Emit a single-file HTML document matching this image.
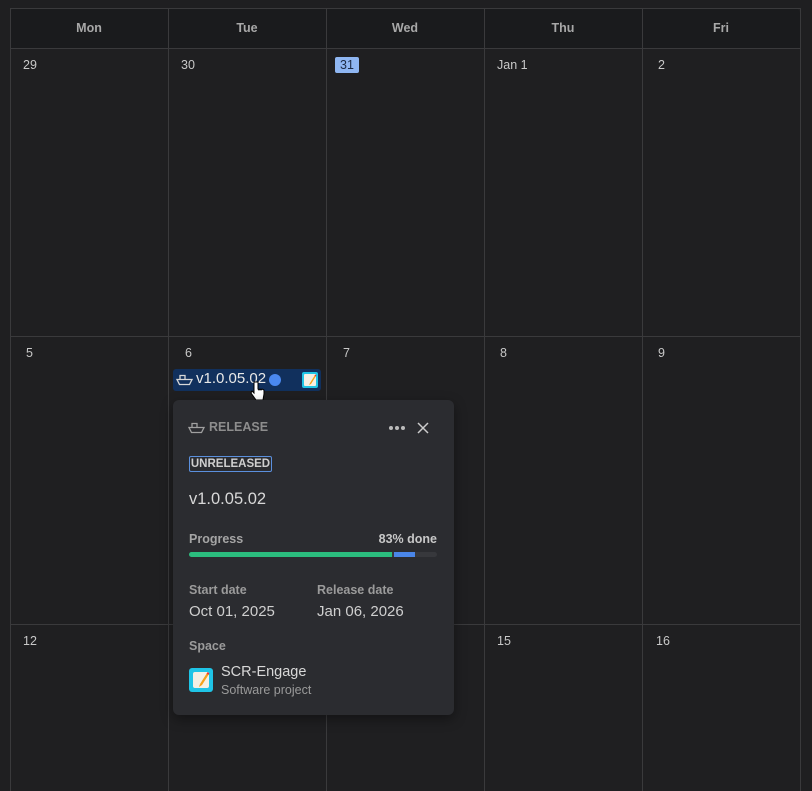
<!DOCTYPE html><html><head><style>
*{margin:0;padding:0;box-sizing:border-box}
body{width:812px;height:791px;background:#1f1f21;font-family:"Liberation Sans",sans-serif;position:relative;overflow:hidden;color:#d0d0d0}
.a{position:absolute}
.v{position:absolute;width:1px;background:#3a3a3c;top:8px;bottom:0}
.h{position:absolute;height:1px;background:#3a3a3c;left:10px;width:790px}
.hd{position:absolute;top:8px;height:40px;line-height:40px;text-align:center;font-size:12.5px;font-weight:bold;color:#a8a8a8;width:158px}
.d{position:absolute;font-size:12.5px;color:#c8c8c8}
.lbl{position:absolute;font-size:12.5px;font-weight:bold;color:#9b9b9b}
.val{position:absolute;font-size:15px;color:#cfcfcf}
.dot{position:absolute;top:426px;width:4px;height:4px;border-radius:50%;background:#bbb}
</style></head><body>
<div class="a" style="left:10px;top:8px;width:790px;height:40px;background:#1a1b1d;border-radius:6px 6px 0 0"></div>
<div class="v" style="left:10px"></div><div class="v" style="left:168px"></div><div class="v" style="left:326px"></div><div class="v" style="left:484px"></div><div class="v" style="left:642px"></div><div class="v" style="left:800px"></div>
<div class="h" style="top:8px"></div><div class="h" style="top:48px"></div><div class="h" style="top:336px"></div><div class="h" style="top:624px"></div>
<div class="hd" style="left:10px">Mon</div><div class="hd" style="left:168px">Tue</div><div class="hd" style="left:326px">Wed</div><div class="hd" style="left:484px">Thu</div><div class="hd" style="left:642px">Fri</div>
<div class="d" style="left:23px;top:58px">29</div><div class="d" style="left:181px;top:58px">30</div>
<div class="a" style="left:335px;top:57px;width:24px;height:16px;background:#8fb6f2;border-radius:2px;color:#1c2a44;font-size:12.5px;text-align:center;line-height:16px">31</div>
<div class="d" style="left:497px;top:58px">Jan 1</div><div class="d" style="left:658px;top:58px">2</div>
<div class="d" style="left:26px;top:346px">5</div><div class="d" style="left:185px;top:346px">6</div><div class="d" style="left:343px;top:346px">7</div><div class="d" style="left:500px;top:346px">8</div><div class="d" style="left:658px;top:346px">9</div>
<div class="d" style="left:23px;top:634px">12</div><div class="d" style="left:497px;top:634px">15</div><div class="d" style="left:656px;top:634px">16</div>
<!-- chip -->
<div class="a" style="left:173px;top:369px;width:148px;height:22px;background:#11305d;border-radius:3px"></div>
<svg class="a" style="left:176px;top:373px" width="17" height="14" viewBox="0 0 17 14" fill="none" stroke="#d8d8d8" stroke-width="1.3"><path d="M4 6V2.5h5V6"/><path d="M1 6.5h15l-2.5 5h-10z"/></svg>
<div class="a" style="left:196px;top:370px;font-size:15px;color:#e8e8e8">v1.0.05.02</div>
<div class="a" style="left:269px;top:374px;width:12px;height:12px;border-radius:50%;background:#4a88f0"></div>
<div class="a" style="left:302px;top:372px;width:16px;height:16px;background:#1fc4e6;border-radius:2px"><div style="margin:2px;width:12px;height:12px;background:#f4efe4;border-radius:1px"></div></div>
<svg class="a" style="left:307px;top:374px" width="10" height="12" viewBox="0 0 10 12"><path d="M8 1L3 9l-1 2 2-1 5-8z" fill="#f4a21a"/><path d="M8 1l1 1" stroke="#e33" stroke-width="1.5"/></svg>
<svg class="a" style="left:250px;top:380px" width="16" height="22" viewBox="0 0 16 22"><path d="M4 2v11l-2-2-1 2 5 7h7l1-6v-4l-2-1-1 1-1-1-1 1-1-1V2z" fill="#fff" stroke="#000" stroke-width="1"/></svg>
<!-- popup -->
<div class="a" style="left:173px;top:400px;width:281px;height:315px;background:#2b2c30;border-radius:6px;box-shadow:0 4px 12px rgba(0,0,0,.4)"></div>
<svg class="a" style="left:188px;top:421px" width="17" height="14" viewBox="0 0 17 14" fill="none" stroke="#a0a0a0" stroke-width="1.3"><path d="M4 6V2.5h5V6"/><path d="M1 6.5h15l-2.5 5h-10z"/></svg>
<div class="a" style="left:209px;top:420px;font-size:12.5px;font-weight:bold;color:#8d8d8d">RELEASE</div>
<div class="dot" style="left:389px"></div><div class="dot" style="left:395px"></div><div class="dot" style="left:401px"></div>
<svg class="a" style="left:416px;top:421px" width="14" height="14" viewBox="0 0 14 14" stroke="#ccc" stroke-width="1.5"><path d="M2 2l10 10M12 2L2 12"/></svg>
<div class="a" style="left:189px;top:456px;width:83px;height:16px;border:1px solid #5b90dd;border-radius:2px;font-size:11.5px;font-weight:bold;color:#cfcfcf;text-align:center;line-height:14px">UNRELEASED</div>
<div class="a" style="left:189px;top:490px;font-size:16.5px;color:#d8d8d8">v1.0.05.02</div>
<div class="lbl" style="left:189px;top:532px;color:#a5a5a5">Progress</div>
<div class="lbl" style="left:360px;top:532px;width:77px;text-align:right;color:#c8c8c8">83% done</div>
<div class="a" style="left:189px;top:552px;width:248px;height:5px;background:#37383c;border-radius:3px"></div>
<div class="a" style="left:189px;top:552px;width:203px;height:5px;background:#2bbd7e;border-radius:3px 0 0 3px"></div>
<div class="a" style="left:394px;top:552px;width:21px;height:5px;background:#4a86e8"></div>
<div class="lbl" style="left:189px;top:583px">Start date</div><div class="lbl" style="left:317px;top:583px">Release date</div>
<div class="val" style="left:189px;top:603px">Oct 01, 2025</div><div class="val" style="left:317px;top:603px">Jan 06, 2026</div>
<div class="lbl" style="left:189px;top:639px">Space</div>
<div class="a" style="left:189px;top:668px;width:24px;height:24px;background:#1fc4e6;border-radius:3px"><div style="margin:4px;width:16px;height:16px;background:#f4efe4;border-radius:2px"></div></div>
<svg class="a" style="left:196px;top:671px" width="14" height="18" viewBox="0 0 14 18"><path d="M11 2L4 13l-1 3 3-2 7-11z" fill="#f4a21a"/><path d="M11 2l2 1" stroke="#e33" stroke-width="2"/></svg>
<div class="a" style="left:221px;top:664px;font-size:14.5px;color:#d8d8d8">SCR-Engage</div>
<div class="a" style="left:221px;top:683px;font-size:12.5px;color:#9a9a9a">Software project</div>
</body></html>
